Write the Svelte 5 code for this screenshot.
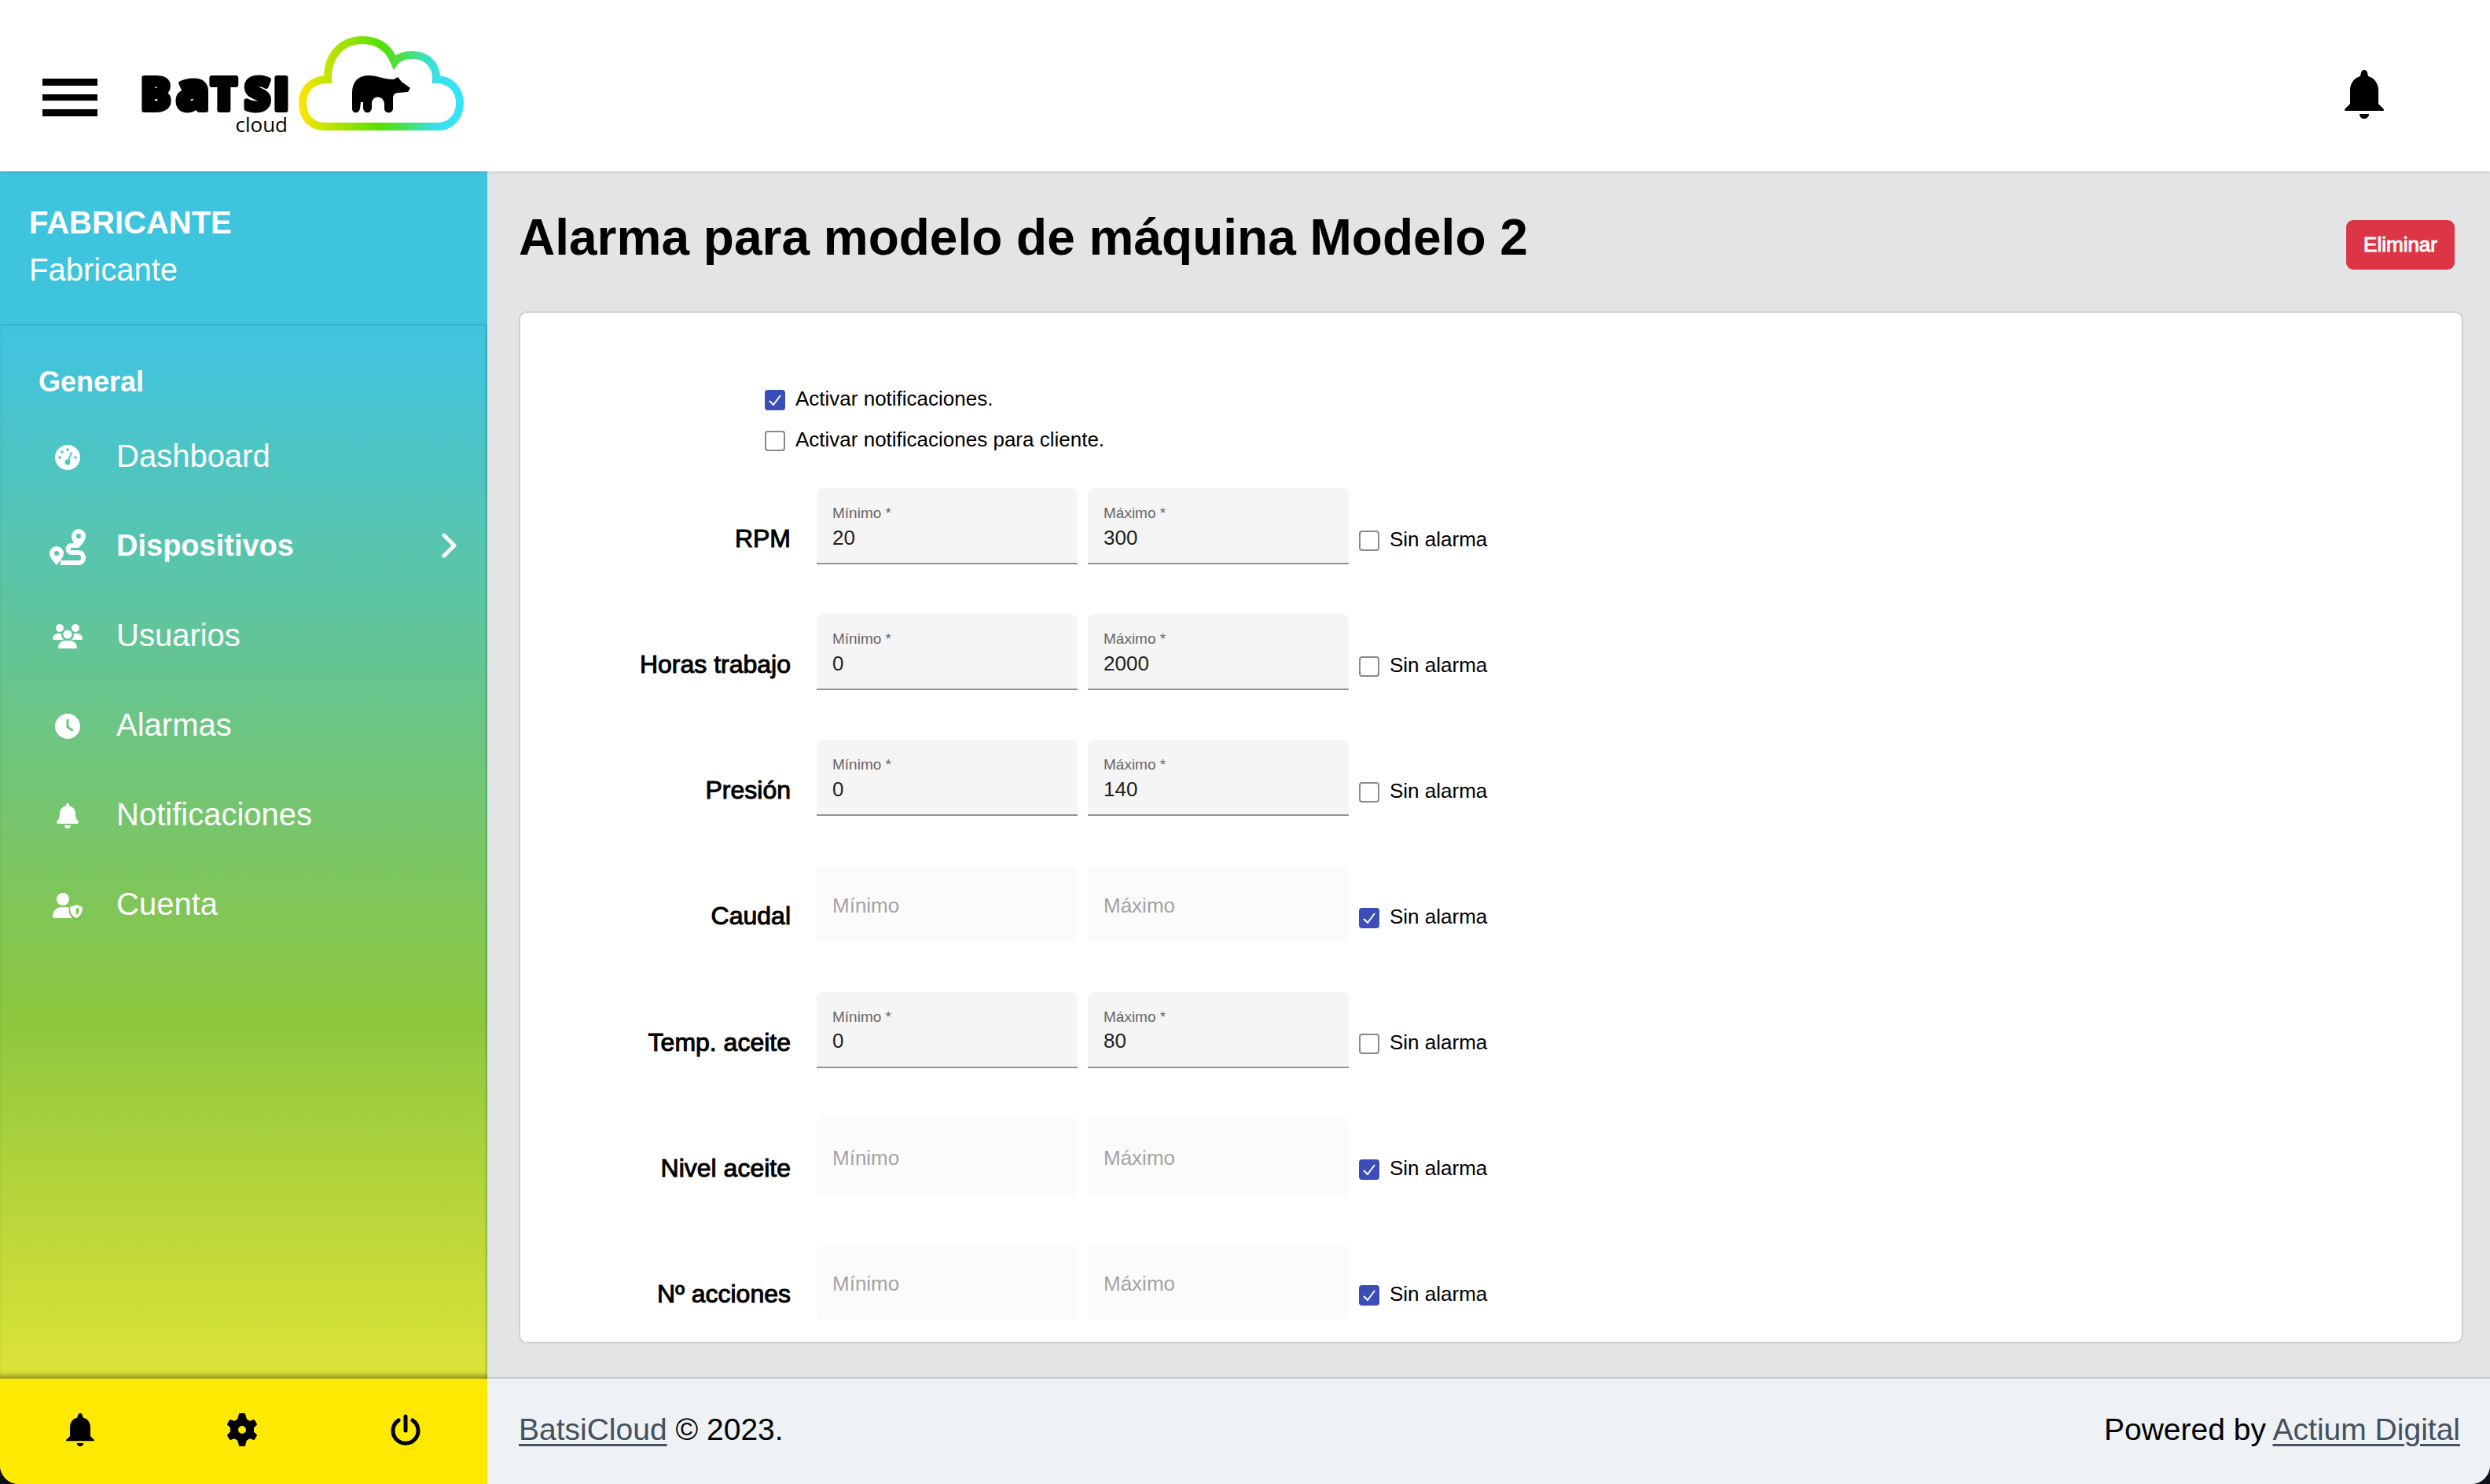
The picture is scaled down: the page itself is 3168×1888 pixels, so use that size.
<script lang="ts">
	type Field = {
		id: string;
		label: string;
		min: string;
		max: string;
		off: boolean;
	};

	const menu = [
		{ icon: 'gauge', label: 'Dashboard' },
		{ icon: 'route', label: 'Dispositivos', active: true },
		{ icon: 'users', label: 'Usuarios' },
		{ icon: 'clock', label: 'Alarmas' },
		{ icon: 'bell', label: 'Notificaciones' },
		{ icon: 'account', label: 'Cuenta' }
	];

	let notify = $state(true);
	let notifyClient = $state(false);

	let fields = $state<Field[]>([
		{ id: 'rpm', label: 'RPM', min: '20', max: '300', off: false },
		{ id: 'horas', label: 'Horas trabajo', min: '0', max: '2000', off: false },
		{ id: 'presion', label: 'Presión', min: '0', max: '140', off: false },
		{ id: 'caudal', label: 'Caudal', min: '', max: '', off: true },
		{ id: 'temp', label: 'Temp. aceite', min: '0', max: '80', off: false },
		{ id: 'nivel', label: 'Nivel aceite', min: '', max: '', off: true },
		{ id: 'acciones', label: 'Nº acciones', min: '', max: '', off: true }
	]);
</script>

{#snippet bell()}
	<path
		d="M224 512c35 0 64-29 64-64H160c0 35 29 64 64 64zm215-150c-19-20-55-52-55-154 0-78-54-140-128-155V32c0-18-14-32-32-32s-32 14-32 32v21C119 68 64 130 64 208c0 102-36 134-55 154-6 7-9 14-9 22 0 16 13 32 32 32h384c19 0 32-16 32-32 0-8-3-15-9-22z"
	/>
{/snippet}

{#snippet solidBell()}
	<path
		d="M25 0c3 0 4 2 5 8C38 10 43 17 43 26v17l6 6c2 2 1 3-1 3H2c-2 0-3-1-1-3l6-6V26c0-9 5-16 13-18C21 2 22 0 25 0zM19 56h12c0 4-3 6-6 6s-6-2-6-6z"
	/>
{/snippet}

{#snippet menuIcon(name: string)}
	{#if name === 'gauge'}
		<svg width="32" height="32" viewBox="0 0 32 32" aria-hidden="true">
			<mask id="gauge-mask" fill="#000">
				<circle cx="16" cy="16" r="16" fill="#fff" />
				<circle cx="16" cy="6" r="1.8" />
				<circle cx="9" cy="9" r="1.8" />
				<circle cx="6" cy="16" r="1.8" />
				<circle cx="26" cy="16" r="1.8" />
				<circle cx="16" cy="22" r="3.4" />
				<path d="M16 22L21 10" stroke="#000" stroke-width="2" stroke-linecap="round" />
			</mask>
			<rect width="32" height="32" mask="url(#gauge-mask)" />
		</svg>
	{:else if name === 'route'}
		<svg width="46" height="46" viewBox="0 0 46 46" aria-hidden="true">
			<path
				fill-rule="evenodd"
				d="M37 0a9 9 0 0 1 9 9c0 5-5 11-9 15l-4-3c-3-4-5-8-5-12A9 9 0 0 1 37 0zm0 6a3 3 0 1 0 0 6 3 3 0 0 0 0-6zM9 22a9 9 0 0 1 9 9c0 5-6 11-9 15-3-4-9-10-9-15a9 9 0 0 1 9-9zm0 6a3 3 0 1 0 0 6 3 3 0 0 0 0-6z"
			/>
			<path
				d="M36 21h-8c-6 0-6 9 0 9h9c8 0 8 13 0 13H14"
				fill="none"
				stroke="currentColor"
				stroke-width="6"
			/>
		</svg>
	{:else if name === 'users'}
		<svg width="38" height="32" viewBox="0 0 38 32" aria-hidden="true">
			<circle cx="9" cy="5" r="5" />
			<circle cx="29" cy="5" r="5" />
			<circle cx="19" cy="13" r="5.6" />
			<path
				d="M0 19c0-4 3-7 7-7h3c1 0 1 0 1 1 0 3 1 5 3 7H1zM38 19c0-4-3-7-7-7h-3c-1 0-1 0-1 1 0 3-1 5-3 7h13zM7 30c0-5 4-9 9-9h6c5 0 9 4 9 9 0 1-1 1-1 1H8s-1 0-1-1z"
			/>
		</svg>
	{:else if name === 'clock'}
		<svg width="32" height="32" viewBox="0 0 32 32" aria-hidden="true">
			<mask id="clock-mask">
				<circle cx="16" cy="16" r="16" fill="#fff" />
				<path d="M16 8v9l6 4" fill="none" stroke="#000" stroke-width="3" stroke-linecap="round" />
			</mask>
			<rect width="32" height="32" mask="url(#clock-mask)" />
		</svg>
	{:else if name === 'bell'}
		<svg width="28" height="32" viewBox="0 0 448 512" aria-hidden="true">{@render bell()}</svg>
	{:else}
		<svg width="38" height="32" viewBox="0 0 38 32" aria-hidden="true">
			<circle cx="13" cy="8" r="8" />
			<path
				fill-rule="evenodd"
				d="M0 30c0-7 5-12 11-12h4c2 0 4 0 6 1C20 25 22 29 25 32H2c-1 0-2-1-2-2zM30 15l8 3c0 7-3 12-8 14-5-2-8-7-8-14zm0 4v9c2-1 4-4 4-8z"
			/>
		</svg>
	{/if}
{/snippet}

{#snippet limit(id: string, name: string, field: Field, key: 'min' | 'max')}
	<div class="field" class:disabled={field.off}>
		<label class="field-label" for={id}>{name}{field.off ? '' : ' *'}</label>
		<input
			{id}
			class="field-input"
			type="text"
			inputmode="numeric"
			required={!field.off}
			disabled={field.off}
			bind:value={field[key]}
		/>
	</div>
{/snippet}

<div class="app">
	<header class="topbar">
		<button type="button" class="icon-button" aria-label="Menú">
			<svg width="70" height="48" viewBox="0 0 70 48" aria-hidden="true">
				<path d="M0 0h70v9H0zM0 20h70v8H0zM0 39h70v9H0z" />
			</svg>
		</button>
		<a class="logo" href="#inicio" aria-label="Batsi cloud">
			<svg width="412" height="124" viewBox="180 44 412 124">
				<defs>
					<linearGradient id="cloud-stroke" x1="379" x2="591" y1="0" y2="0" gradientUnits="userSpaceOnUse">
						<stop offset="0" stop-color="#ffe600" />
						<stop offset="0.5" stop-color="#55e005" />
						<stop offset="0.62" stop-color="#4be04a" />
						<stop offset="0.82" stop-color="#38e0e6" />
						<stop offset="1" stop-color="#38e4ff" />
					</linearGradient>
				</defs>
				<g class="brand">
					<text x="179" y="140" font-size="57">B</text>
					<text x="224" y="140" font-size="68">a</text>
					<text x="268" y="140" font-size="57">T</text>
					<text x="311" y="140" font-size="57">S</text>
					<text x="348" y="140" font-size="57">I</text>
				</g>
				<text class="brand-sub" x="366" y="168" text-anchor="end" font-size="26">cloud</text>
				<path
					d="M417 101C416 72 434 51 461 51C482 51 495 62 502 79C507 72 515 70 525 70C543 70 556 83 555 101C573 101 585 114 585 131C585 149 573 161 557 161H413C396 161 385 149 385 131C385 113 397 101 417 101Z"
					fill="none"
					stroke="url(#cloud-stroke)"
					stroke-width="10"
				/>
				<path
					d="M448 118C448 104 456 96 469 96C480 96 488 101 501 101L506 98L511 104L522 112L519 117L507 118C502 118 500 121 500 125V138C500 145 489 145 489 138V132C488 121 474 121 473 131V138C472 145 463 145 462 138V130H459L458 138C457 145 448 145 448 138Z"
				/>
			</svg>
		</a>
		<button type="button" class="icon-button alerts" aria-label="Avisos">
			<svg width="50" height="62" viewBox="0 0 50 62" aria-hidden="true">{@render solidBell()}</svg>
		</button>
	</header>

	<div class="body">
		<aside class="sidebar">
			<div class="user">
				<strong>FABRICANTE</strong>
				<span>Fabricante</span>
			</div>
			<nav class="menu">
				<h2>General</h2>
				{#each menu as item}
					<a class="menu-item" class:active={item.active} href="#{item.label.toLowerCase()}">
						<span class="menu-icon">{@render menuIcon(item.icon)}</span>
						<span class="menu-label">{item.label}</span>
						{#if item.active}
							<svg class="chevron" width="20" height="32" viewBox="0 0 20 32" aria-hidden="true">
								<path d="M3 3l13 13L3 29" />
							</svg>
						{/if}
					</a>
				{/each}
			</nav>
			<div class="shortcuts">
				<button type="button" class="icon-button" aria-label="Notificaciones">
					<svg width="36" height="42" viewBox="0 0 50 62" preserveAspectRatio="none" aria-hidden="true">{@render solidBell()}</svg>
				</button>
				<button type="button" class="icon-button" aria-label="Ajustes">
					<svg class="gear" width="40" height="42" viewBox="0 0 40 42" aria-hidden="true">
						<path
							fill-rule="evenodd"
							d="M17 1h6l2 7 5 3 5-2 3 5-4 4v6l4 4-3 5-5-2-5 3-2 7h-6l-2-7-5-3-5 2-3-5 4-4v-6l-4-4 3-5 5 2 5-3zM20 15a6 6 0 1 0 0 12 6 6 0 0 0 0-12z"
						/>
					</svg>
				</button>
				<button type="button" class="icon-button" aria-label="Salir">
					<svg class="power" width="40" height="40" viewBox="0 0 40 40" aria-hidden="true">
						<path d="M20 3v18M11 8a16 16 0 1 0 18 0" />
					</svg>
				</button>
			</div>
		</aside>

		<div class="content">
			<main>
				<div class="page-head">
					<h1>Alarma para modelo de máquina Modelo 2</h1>
					<button type="button" class="delete">Eliminar</button>
				</div>

				<form class="card">
					<div class="options">
						<label class="check">
							<input type="checkbox" bind:checked={notify} />
							Activar notificaciones.
						</label>
						<label class="check">
							<input type="checkbox" bind:checked={notifyClient} />
							Activar notificaciones para cliente.
						</label>
					</div>

					<div class="rows">
						{#each fields as field (field.id)}
							<div class="row" role="group" aria-labelledby="{field.id}-name">
								<span class="row-name" id="{field.id}-name">{field.label}</span>
								{@render limit(`${field.id}-min`, 'Mínimo', field, 'min')}
								{@render limit(`${field.id}-max`, 'Máximo', field, 'max')}
								<label class="check">
									<input type="checkbox" bind:checked={field.off} />
									Sin alarma
								</label>
							</div>
						{/each}
					</div>
				</form>
			</main>

			<footer>
				<span><a href="#batsicloud">BatsiCloud</a> © 2023.</span>
				<span>Powered by <a href="#actium">Actium Digital</a></span>
			</footer>
		</div>
	</div>
</div>

<style>
	:global(body) {
		background: #0b1319;
	}

	.app {
		display: flex;
		flex-direction: column;
		min-height: 100vh;
		overflow: hidden;
		border-radius: 0 0 24px 24px;
		background: #e3e4e6;
		color: #000000;
		font-family: 'Liberation Sans', Arial, sans-serif;
		font-size: 40px;
	}

	.app *,
	.app {
		box-sizing: border-box;
	}

	svg {
		display: block;
		fill: currentColor;
	}

	.icon-button {
		padding: 0;
		border: none;
		background: none;
		color: #000000;
		cursor: pointer;
	}

	.topbar {
		position: relative;
		display: flex;
		align-items: center;
		height: 218px;
		padding: 30px 135px 0 54px;
		background: #ffffff;
		box-shadow: 0 1px 5px rgb(0 0 0 / 0.12);
	}

	.logo {
		margin: 0 auto 36px 56px;
		color: #000000;
	}

	.logo svg {
		overflow: visible;
	}

	.brand {
		font-family: 'Open Sans', 'Noto Sans', sans-serif;
		font-weight: 800;
		stroke: currentColor;
		stroke-width: 6;
		stroke-linejoin: round;
	}

	.brand-sub {
		font-family: 'Open Sans', 'Noto Sans', sans-serif;
	}

	.alerts {
		margin-bottom: 8px;
	}

	.body {
		display: flex;
		flex: 1;
	}

	.sidebar {
		display: flex;
		flex-direction: column;
		flex: 0 0 620px;
		color: #ffffff;
	}

	.user {
		display: flex;
		flex-direction: column;
		height: 196px;
		padding: 35px 37px 0;
		border-bottom: 2px solid #38b4cd;
		background: #3fc4de;
		line-height: 60px;
	}

	.menu {
		flex: 1;
		background: linear-gradient(#3fc4de 0%, #42c4dc 3%, #8cc63f 65%, #dde336 100%);
		box-shadow:
			inset -3px 0 2px -1px rgb(0 120 90 / 0.25),
			inset 0 -8px 6px -4px rgb(70 60 20 / 0.5);
	}

	.menu h2 {
		margin: 0;
		padding: 45px 49px 10px;
		font-size: 36px;
		line-height: 54px;
	}

	.menu-item {
		display: flex;
		align-items: center;
		height: 114px;
		padding-right: 38px;
		color: #ffffff;
		text-decoration: none;
	}

	.menu-item.active {
		font-size: 38px;
		font-weight: 700;
	}

	.menu-icon {
		display: flex;
		justify-content: center;
		width: 124px;
		margin: 4px 0 0 24px;
	}

	.menu-label {
		flex: 1;
	}

	.chevron path {
		fill: none;
		stroke: currentColor;
		stroke-width: 5;
		stroke-linecap: round;
		stroke-linejoin: round;
	}

	.shortcuts {
		display: flex;
		align-items: center;
		justify-content: space-between;
		height: 134px;
		padding: 0 84px 4px;
		background: #feea00;
	}

	.gear path {
		stroke: currentColor;
		stroke-width: 2;
		stroke-linejoin: round;
	}

	.power path {
		fill: none;
		stroke: currentColor;
		stroke-width: 5;
		stroke-linecap: round;
	}

	.content {
		display: flex;
		flex: 1;
		flex-direction: column;
		min-width: 0;
	}

	main {
		display: flex;
		flex: 1;
		flex-direction: column;
		padding: 43px 34px 43px 40px;
	}

	.page-head {
		display: flex;
		align-items: flex-end;
		justify-content: space-between;
		margin-bottom: 53px;
		padding-right: 11px;
	}

	h1 {
		margin: 0;
		font-size: 64px;
		line-height: 82px;
	}

	.delete {
		height: 63px;
		padding: 0 22px;
		border: none;
		border-radius: 9px;
		background: #dc3545;
		color: #ffffff;
		font: inherit;
		font-size: 26px;
		-webkit-text-stroke: 1px currentColor;
		cursor: pointer;
	}

	.card {
		display: flex;
		flex: 1;
		flex-direction: column;
		padding: 83px 0 28px;
		border: 2px solid #cfd0d2;
		border-radius: 10px;
		background: #ffffff;
	}

	.options {
		display: grid;
		justify-content: start;
		margin-bottom: 36px;
		padding-left: 311px;
	}

	.check {
		display: flex;
		align-items: center;
		gap: 13px;
		font-size: 26px;
		line-height: 52px;
	}

	.check input {
		appearance: none;
		width: 26px;
		height: 26px;
		margin: 4px 0 0;
		border: 2px solid #8a8a8a;
		border-radius: 4px;
		background: #ffffff;
	}

	.check input:checked {
		border-color: #3a4db8;
		background: #3a4db8
			url("data:image/svg+xml,%3Csvg xmlns='http://www.w3.org/2000/svg' viewBox='0 0 22 22'%3E%3Cpath d='M4 12l5 5L18 5' fill='none' stroke='white' stroke-width='2'/%3E%3C/svg%3E")
			center / 22px no-repeat;
	}

	.rows {
		display: flex;
		flex: 1;
		flex-direction: column;
		justify-content: space-between;
	}

	.row {
		display: grid;
		grid-template-columns: 364px 332px 332px auto;
		column-gap: 13px;
		justify-content: start;
		height: 97px;
	}

	.row-name {
		padding: 46px 20px 0 0;
		font-size: 32px;
		line-height: 36px;
		text-align: right;
		-webkit-text-stroke: 1px currentColor;
	}

	.row .check {
		padding-top: 32px;
	}

	.field {
		display: flex;
		flex-direction: column;
		padding: 20px 20px 0;
		border-bottom: 2px solid #949494;
		border-radius: 8px 8px 0 0;
		background: #f5f5f5;
	}

	.field-label {
		color: #666666;
		font-size: 19px;
		line-height: 24px;
	}

	.field-input {
		width: 100%;
		height: 38px;
		padding: 0;
		border: none;
		outline: none;
		background: transparent;
		color: #1f1f1f;
		font: inherit;
		font-size: 26px;
	}

	.field.disabled {
		border-color: transparent;
		background: #fbfbfb;
	}

	.disabled .field-label {
		padding-top: 12px;
		color: #a3a3a3;
		font-size: 26px;
		line-height: 38px;
	}

	.disabled .field-input {
		height: 20px;
	}

	footer {
		display: flex;
		align-items: center;
		justify-content: space-between;
		height: 136px;
		padding: 0 38px 4px 40px;
		border-top: 2px solid #c8cacc;
		background: #eef2f5;
		font-size: 39px;
	}

	footer a {
		color: #44515e;
		text-decoration-thickness: 3px;
		text-underline-offset: 5px;
	}
</style>
